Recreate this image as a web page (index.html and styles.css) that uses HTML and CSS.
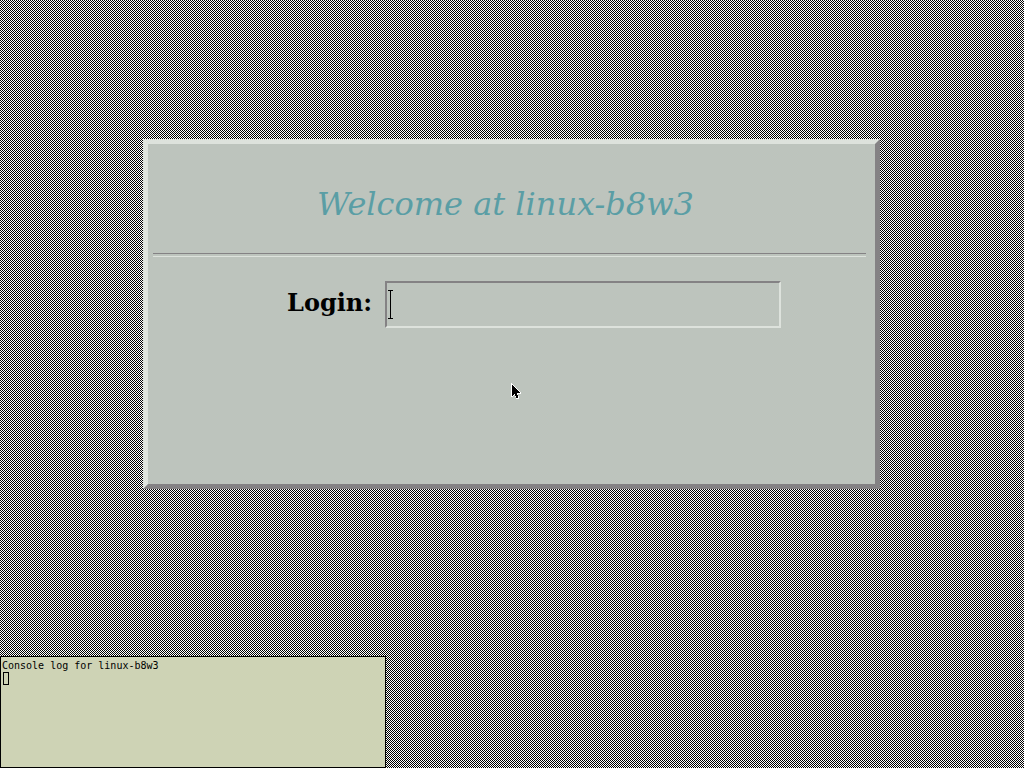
FILE: index.html
```html
<!DOCTYPE html>
<html lang="en">
<head>
<meta charset="utf-8">
<title>Login - linux-b8w3</title>
<link rel="stylesheet" href="styles.css">
</head>
<body>
<main class="greeter">
  <form class="panel">
    <h1 class="welcome">Welcome at linux-b8w3</h1>
    <div class="rule"></div>
    <div class="login-row">
      <label class="login-label" for="login">Login:</label>
      <div class="field">
        <input class="login-input" id="login" type="text" autocomplete="off">
        <svg class="caret" width="5" height="29" viewBox="0 0 5 29" shape-rendering="crispEdges" aria-hidden="true"><path d="M0 0h5v1H3v27h2v1H0v-1h2V1H0z"/></svg>
      </div>
    </div>
  </form>
</main>
<section class="console">
  <p class="console-line">Console log for linux-b8w3</p>
  <span class="console-cursor"></span>
</section>
<svg class="pointer" width="10" height="16" viewBox="0 0 10 16" shape-rendering="crispEdges" aria-hidden="true"><path fill="#fff" d="M0 0h1v1h1v1h1v1h1v1h1v1h1v1h1v1h1v1h1v1h1v2H7v2h1v3H5v-2H4v-2H3v1H2v1H0z"/><path d="M1 2h1v1h1v1h1v1h1v1h1v1h1v1h1v1h1v1H6v2h1v3H5v-2H4v-2H3v1H2v1H1z"/></svg>
</body>
</html>
```
FILE: styles.css
```css
* { box-sizing: border-box; }
body {
  margin: 0;
  min-height: 100vh;
  display: flex;
  flex-direction: column;
  justify-content: space-between;
  background: #fff url("data:image/svg+xml,%3Csvg xmlns='http://www.w3.org/2000/svg' width='64' height='64' shape-rendering='crispEdges'%3E%3Cpattern id='p' width='2' height='2' patternUnits='userSpaceOnUse'%3E%3Cpath d='M0 0h1v1H0zM1 1h1v1H1z'/%3E%3C/pattern%3E%3Crect width='64' height='64' fill='url(%23p)'/%3E%3C/svg%3E") 0 0 / 64px 64px;
  font-family: "DejaVu Serif", serif;
}
.greeter {
  padding: 139px 144px 0 143px;
}
.panel {
  min-height: 350px;
  padding: 38px 9px 0 5px;
  border: 5px solid;
  border-color: #dde2dc #848284 #848284 #dde2dc;
  background: #bdc4bd;
}
.welcome {
  margin: 0;
  padding-right: 8px;
  font-size: 32px;
  line-height: 44px;
  font-weight: 400;
  font-style: italic;
  text-align: center;
  color: #5a9ea5;
}
.rule {
  height: 4px;
  margin: 27px 0 24px;
  border-top: 1px solid #848284;
  border-bottom: 1px solid #dde2dc;
}
.login-row {
  display: flex;
  align-items: flex-start;
  gap: 13px;
  padding: 0 85px 0 134px;
}
.login-label {
  font-size: 24px;
  line-height: 44px;
  font-weight: 700;
  color: #000;
}
.field {
  flex: 1;
  position: relative;
}
.login-input {
  display: block;
  width: 100%;
  height: 47px;
  padding: 0 8px;
  border: 2px solid;
  border-color: #848284 #dde2dc #dde2dc #848284;
  border-radius: 0;
  background: transparent;
  font: 24px "DejaVu Serif", serif;
  outline: none;
}
.caret {
  position: absolute;
  left: 3px;
  top: 9px;
}
.console {
  width: 386px;
  height: 112px;
  padding: 3px 1px;
  border: 1px solid #000;
  background: #ced3b5;
}
.console-line {
  margin: 0;
  font: 10px/12px "DejaVu Sans Mono", monospace;
  color: #000;
}
.console-cursor {
  display: block;
  width: 6px;
  height: 13px;
  margin-left: 1px;
  border: 1px solid #000;
}
.pointer {
  position: absolute;
  left: 511px;
  top: 383px;
}
```
